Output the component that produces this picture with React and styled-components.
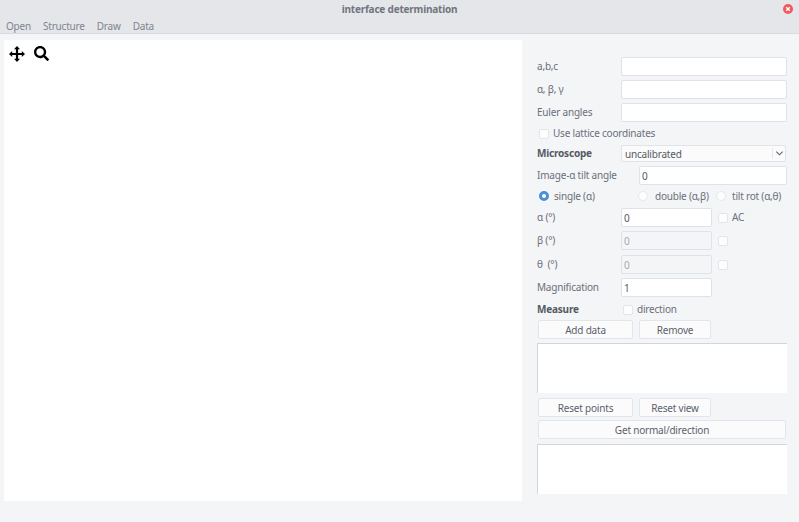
import React from "react";
import styled, { createGlobalStyle } from "styled-components";
import { FaSearch } from "react-icons/fa";

const GlobalStyle = createGlobalStyle`
  html, body {
    margin: 0;
    padding: 0;
    background: #f4f5f7;
  }
  body {
    font-family: "Noto Sans", "Open Sans", sans-serif;
    font-size: 10px;
    letter-spacing: -0.2px;
    color: #5c616c;
  }
`;

const Window = styled.div`
  width: 799px;
  height: 522px;
  background: #f4f5f7;
  overflow: hidden;
  display: flex;
  flex-direction: column;
`;

const Header = styled.header`
  height: 34px;
  box-sizing: border-box;
  flex: none;
  background: #e4e6ea;
  border-bottom: 1px solid #d8dadf;
`;

const TitleBar = styled.div`
  height: 18px;
  display: flex;
  align-items: center;
  justify-content: center;
  position: relative;
  font-weight: 700;
  color: #71757f;
`;

const CloseButton = styled.span`
  position: absolute;
  right: 6px;
  top: 4px;
  width: 10px;
  height: 10px;
  display: flex;
`;

const MenuBar = styled.nav`
  height: 15px;
  display: flex;
  align-items: center;
  gap: 12px;
  padding-left: 6px;
  color: #7f8490;
`;

const Main = styled.main`
  flex: 1;
  display: flex;
  padding: 6px 0 0 4px;
`;

const Canvas = styled.section`
  width: 518px;
  height: 461px;
  flex: none;
  background: #fff;
  color: #000;
  display: flex;
  gap: 9px;
  padding: 6px 0 0 5px;
  box-sizing: border-box;
`;

const ToolIcon = styled.span`
  display: flex;
  font-size: 15px;
  height: 16px;
  width: 16px;
`;

const Panel = styled.aside`
  flex: 1;
  padding: 17px 12px 0 15px;
  display: flex;
  flex-direction: column;
`;

const Row = styled.div`
  display: flex;
  align-items: center;
  height: ${(p) => p.$h || 19}px;
  margin-bottom: ${(p) => p.$mb ?? 4}px;
`;

const Label = styled.label`
  width: ${(p) => p.$w || 84}px;
  flex: none;
  padding-bottom: 1px;
  font-weight: ${(p) => (p.$bold ? 700 : 400)};
  color: ${(p) => (p.$bold ? "#555963" : "#6b6f7a")};
  white-space: nowrap;
`;

const Field = styled.input`
  box-sizing: border-box;
  width: ${(p) => p.$w || 166}px;
  height: 19px;
  flex: none;
  padding: 0 2px;
  font: inherit;
  letter-spacing: inherit;
  color: #555963;
  background: #fff;
  border: 1px solid #dfe2ea;
  border-radius: 2px;
  outline: none;

  &:disabled {
    background: #f4f5f7;
    color: #a6a9b0;
  }
`;

const SelectBox = styled.div`
  box-sizing: border-box;
  width: 165px;
  height: 17px;
  display: flex;
  align-items: center;
  justify-content: space-between;
  padding-left: 3px;
  background: #fbfbfc;
  border: 1px solid #e0e3ea;
  border-radius: 2px;
  color: #555963;
`;

const Chevron = styled.span`
  display: flex;
  align-items: center;
  justify-content: center;
  width: 12px;
  height: 11px;
  border-left: 1px solid #e6e8ed;
`;

const Box = styled.span`
  box-sizing: border-box;
  display: inline-block;
  width: 10px;
  height: 10px;
  flex: none;
  background: #fdfdfe;
  border: 1px solid #e3e5ec;
  border-radius: 2px;
  margin: ${(p) => p.$m || "0"};
`;

const Radio = styled.span`
  box-sizing: border-box;
  display: inline-block;
  width: 10px;
  height: 10px;
  flex: none;
  border-radius: 50%;
  background: ${(p) => (p.$on ? "#fff" : "#fdfdfe")};
  border: ${(p) => (p.$on ? "3px solid #4a90d9" : "1px solid #e6e8ed")};
  margin-left: ${(p) => p.$ml || 0}px;
  margin-right: ${(p) => p.$mr || 5}px;
`;

const Option = styled.span`
  display: flex;
  align-items: center;
  padding-bottom: 1px;
  color: #6b6f7a;
  white-space: nowrap;
  width: ${(p) => (p.$w ? `${p.$w}px` : "auto")};
`;

const Button = styled.button`
  box-sizing: border-box;
  width: ${(p) => p.$w || 95}px;
  height: 19px;
  flex: none;
  margin-left: 1px;
  margin-right: 5px;
  padding: 0;
  font: inherit;
  letter-spacing: inherit;
  color: #5c616c;
  background: #fbfbfc;
  border: 1px solid #e3e5ec;
  border-radius: 2px;
`;

const Output = styled.div`
  width: 250px;
  height: 50px;
  flex: none;
  box-sizing: border-box;
  background: #fff;
  border-top: 1px solid #d3d5da;
  border-left: 1px solid #d3d5da;
  margin-bottom: ${(p) => p.$mb ?? 0}px;
`;

const MoveIcon = () => (
  <svg width="16" height="16" viewBox="0 0 16 16">
    <path d="M8 0 11 3.2H9.1V6.9H12.8V5L16 8 12.8 11V9.1H9.1V12.8H11L8 16 5 12.8H6.9V9.1H3.2V11L0 8 3.2 5V6.9H6.9V3.2H5Z" fill="#000" />
  </svg>
);

export default function App() {
  return (
    <Window>
      <GlobalStyle />
      <Header>
        <TitleBar>
          interface determination
          <CloseButton>
            <svg width="10" height="10" viewBox="0 0 10 10">
              <circle cx="5" cy="5" r="5" fill="#ef5a5f" />
              <path d="M3.2 3.2 6.8 6.8M6.8 3.2 3.2 6.8" stroke="#fff" strokeWidth="1.3" />
            </svg>
          </CloseButton>
        </TitleBar>
        <MenuBar>
          <span>Open</span>
          <span>Structure</span>
          <span>Draw</span>
          <span>Data</span>
        </MenuBar>
      </Header>
      <Main>
        <Canvas>
          <ToolIcon><MoveIcon /></ToolIcon>
          <ToolIcon><FaSearch /></ToolIcon>
        </Canvas>
        <Panel>
          <Row><Label>a,b,c</Label><Field /></Row>
          <Row><Label>α, β, γ</Label><Field /></Row>
          <Row $mb={2}><Label>Euler angles</Label><Field /></Row>
          <Row $mb={2}>
            <Box $m="0 4px 0 2px" />
            <Option>Use lattice coordinates</Option>
          </Row>
          <Row $h={17} $mb={4}>
            <Label $bold>Microscope</Label>
            <SelectBox>
              uncalibrated
              <Chevron>
                <svg width="9" height="9" viewBox="0 0 10 10">
                  <path d="M1.5 3 5 6.5 8.5 3" fill="none" stroke="#5c616c" strokeWidth="1.2" />
                </svg>
              </Chevron>
            </SelectBox>
          </Row>
          <Row $mb={3}><Label $w={102}>Image-α tilt angle</Label><Field $w={148} value="0" readOnly /></Row>
          <Row $h={17} $mb={3}>
            <Option $w={101}><Radio $on $ml={2} />single (α)</Option>
            <Option $w={78}><Radio $mr={7} />double (α,β)</Option>
            <Option><Radio $mr={6} />tilt rot (α,θ)</Option>
          </Row>
          <Row><Label>α (°)</Label><Field $w={91} value="0" readOnly /><Box $m="0 4px 0 6px" /><Option>AC</Option></Row>
          <Row $mb={5}><Label>β (°)</Label><Field $w={91} value="0" disabled readOnly /><Box $m="0 0 0 6px" /></Row>
          <Row><Label>θ&nbsp; (°)</Label><Field $w={91} value="0" disabled readOnly /><Box $m="0 0 0 6px" /></Row>
          <Row $mb={3}><Label>Magnification</Label><Field $w={91} value="1" readOnly /></Row>
          <Row $mb={1}><Label $bold $w={86}>Measure</Label><Box $m="0 4px 0 0" /><Option>direction</Option></Row>
          <Row><Button>Add data</Button><Button $w={72}>Remove</Button></Row>
          <Output $mb={5} />
          <Row $mb={3}><Button>Reset points</Button><Button $w={72}>Reset view</Button></Row>
          <Row $mb={5}><Button $w={248}>Get normal/direction</Button></Row>
          <Output />
        </Panel>
      </Main>
    </Window>
  );
}
